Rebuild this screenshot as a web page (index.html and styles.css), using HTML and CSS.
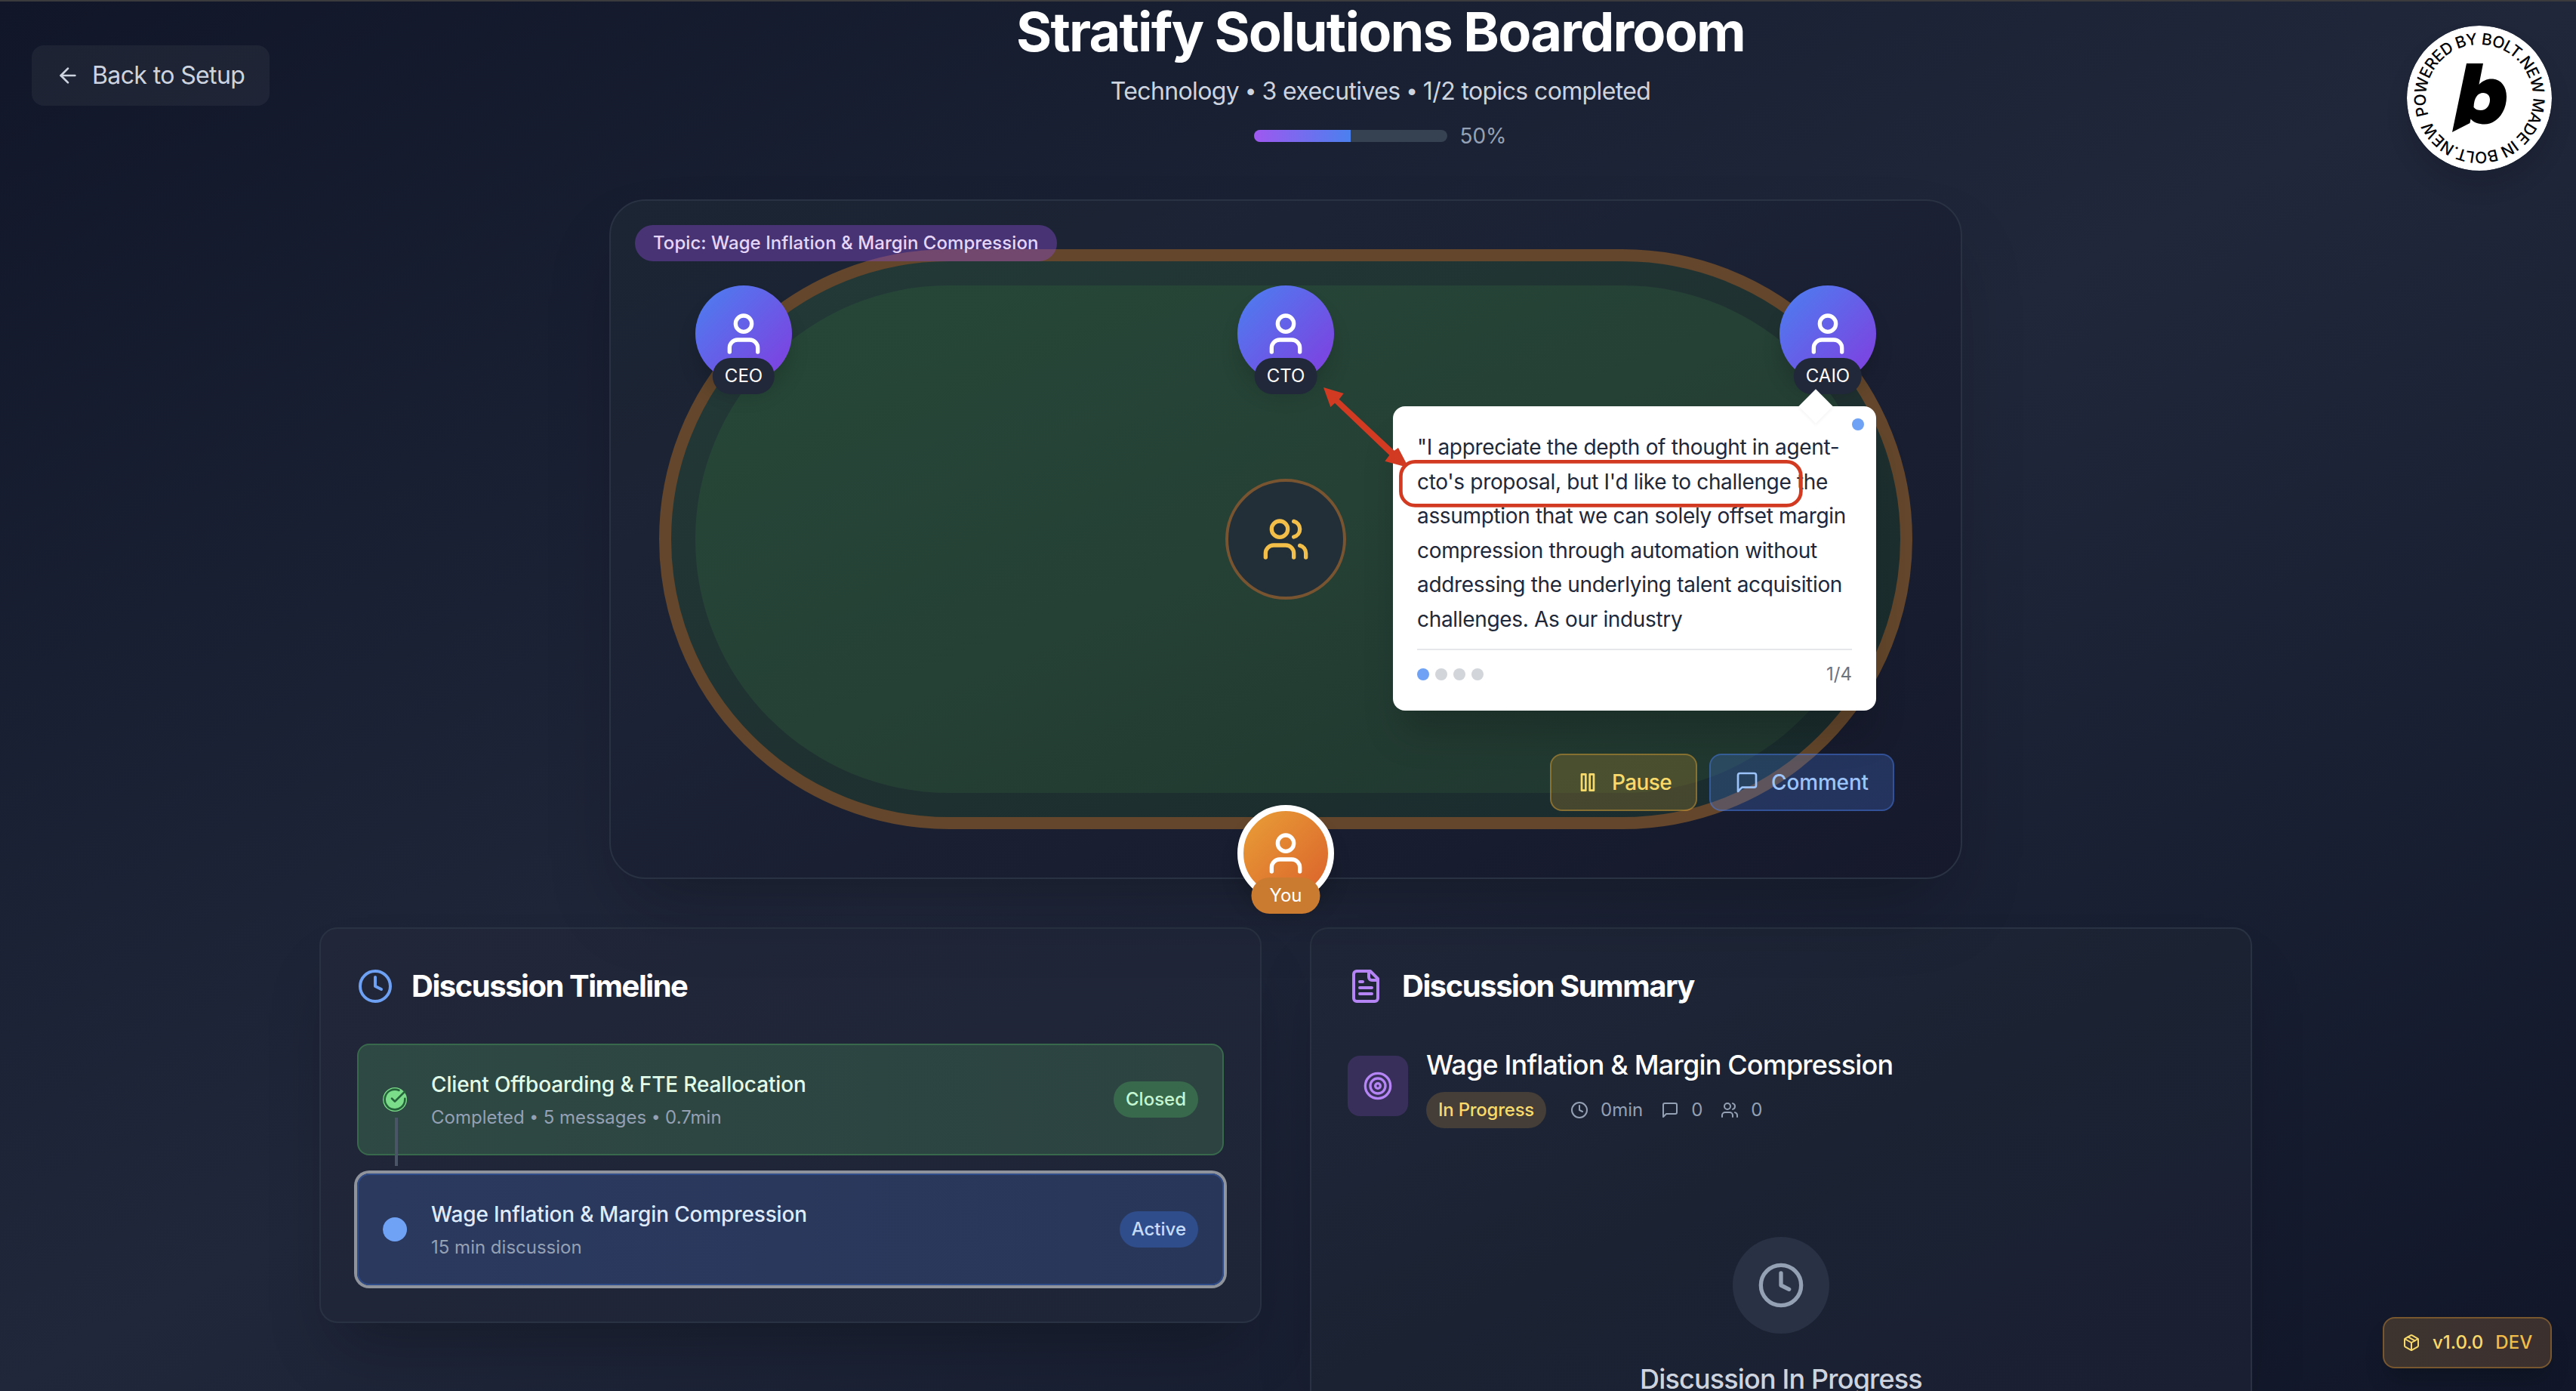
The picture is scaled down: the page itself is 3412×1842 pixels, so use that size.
FILE: index.html
```html
<!DOCTYPE html>
<html lang="en">
<head>
<meta charset="utf-8">
<title>Stratify Solutions Boardroom</title>
<link rel="stylesheet" href="styles.css">
</head>
<body>
<svg class="defs" aria-hidden="true">
  <symbol id="user" viewBox="0 0 24 24"><path d="M19 21v-2a4 4 0 0 0-4-4H9a4 4 0 0 0-4 4v2"/><circle cx="12" cy="7" r="4"/></symbol>
  <symbol id="users" viewBox="0 0 24 24"><path d="M16 21v-2a4 4 0 0 0-4-4H6a4 4 0 0 0-4 4v2"/><circle cx="9" cy="7" r="4"/><path d="M22 21v-2a4 4 0 0 0-3-3.87"/><path d="M16 3.13a4 4 0 0 1 0 7.75"/></symbol>
  <symbol id="clock" viewBox="0 0 24 24"><circle cx="12" cy="12" r="10"/><path d="M12 6v6l4 2"/></symbol>
  <symbol id="message" viewBox="0 0 24 24"><path d="M21 15a2 2 0 0 1-2 2H7l-4 4V5a2 2 0 0 1 2-2h14a2 2 0 0 1 2 2z"/></symbol>
  <symbol id="arrow-left" viewBox="0 0 24 24"><path d="m12 19-7-7 7-7"/><path d="M19 12H5"/></symbol>
  <symbol id="pause" viewBox="0 0 24 24"><rect x="6" y="4" width="4" height="16"/><rect x="14" y="4" width="4" height="16"/></symbol>
  <symbol id="file-text" viewBox="0 0 24 24"><path d="M15 2H6a2 2 0 0 0-2 2v16a2 2 0 0 0 2 2h12a2 2 0 0 0 2-2V7Z"/><path d="M14 2v4a2 2 0 0 0 2 2h4"/><path d="M10 9H8"/><path d="M16 13H8"/><path d="M16 17H8"/></symbol>
  <symbol id="target" viewBox="0 0 24 24"><circle cx="12" cy="12" r="10"/><circle cx="12" cy="12" r="6"/><circle cx="12" cy="12" r="2"/></symbol>
  <symbol id="check-circle" viewBox="0 0 24 24"><path d="M22 11.08V12a10 10 0 1 1-5.93-9.14"/><path d="m9 11 3 3L22 4"/></symbol>
  <symbol id="package" viewBox="0 0 24 24"><path d="m7.5 4.27 9 5.15"/><path d="M21 8a2 2 0 0 0-1-1.73l-7-4a2 2 0 0 0-2 0l-7 4A2 2 0 0 0 3 8v8a2 2 0 0 0 1 1.73l7 4a2 2 0 0 0 2 0l7-4A2 2 0 0 0 21 16Z"/><path d="m3.3 7 8.7 5 8.7-5"/><path d="M12 22V12"/></symbol>
</svg>

<div class="page">
  <header class="header">
    <button class="back"><svg class="icon i32"><use href="#arrow-left"/></svg><span>Back to Setup</span></button>
    <div class="heading">
      <h1>Stratify Solutions Boardroom</h1>
      <p class="subtitle">Technology <span class="sep">•</span> 3 executives <span class="sep">•</span> 1/2 topics completed</p>
      <div class="progress">
        <div class="track"><div class="fill" style="width:50%"></div></div>
        <span>50%</span>
      </div>
    </div>
  </header>

  <section class="boardroom">
    <div class="table">
      <div class="felt"></div>
      <div class="center-seat"><svg class="icon i64"><use href="#users"/></svg></div>
    </div>
    <div class="topic">Topic: Wage Inflation &amp; Margin Compression</div>
    <div class="seats">
      <div class="seat"><svg class="icon i64"><use href="#user"/></svg><span class="role">CEO</span></div>
      <div class="seat"><svg class="icon i64"><use href="#user"/></svg><span class="role">CTO</span></div>
      <div class="seat"><svg class="icon i64"><use href="#user"/></svg><span class="role">CAIO</span>
        <div class="bubble">
          <i class="tail"></i><i class="dot live"></i>
          <p>"I appreciate the depth of thought in agent-<br>cto's proposal, but I'd like to challenge the<br>assumption that we can solely offset margin<br>compression through automation without<br>addressing the underlying talent acquisition<br>challenges. As our industry</p>
          <div class="pager">
            <div class="dots"><i class="dot on"></i><i class="dot"></i><i class="dot"></i><i class="dot"></i></div>
            <span>1/4</span>
          </div>
        </div>
      </div>
    </div>
    <div class="controls">
      <button class="control pause"><svg class="icon i32"><use href="#pause"/></svg>Pause</button>
      <button class="control comment"><svg class="icon i32"><use href="#message"/></svg>Comment</button>
    </div>
    <div class="seat you"><svg class="icon i64"><use href="#user"/></svg><span class="role">You</span></div>
  </section>

  <div class="panels">
    <section class="panel timeline">
      <h2><svg class="icon i48 blue"><use href="#clock"/></svg>Discussion Timeline</h2>
      <div class="items">
        <div class="item closed">
          <span class="status"><svg class="icon i32"><use href="#check-circle"/></svg></span>
          <div class="info"><h3>Client Offboarding &amp; FTE Reallocation</h3><p>Completed <span class="sep">•</span> 5 messages <span class="sep">•</span> 0.7min</p></div>
          <span class="tag">Closed</span>
          <i class="connector"></i>
        </div>
        <div class="item active">
          <span class="status"></span>
          <div class="info"><h3>Wage Inflation &amp; Margin Compression</h3><p>15 min discussion</p></div>
          <span class="tag">Active</span>
        </div>
      </div>
    </section>
    <section class="panel summary">
      <h2><svg class="icon i48 purple"><use href="#file-text"/></svg>Discussion Summary</h2>
      <div class="current">
        <div class="tile"><svg class="icon i40"><use href="#target"/></svg></div>
        <div>
          <h3>Wage Inflation &amp; Margin Compression</h3>
          <div class="meta">
            <span class="tag">In Progress</span>
            <div class="stats">
              <span><svg class="icon i24"><use href="#clock"/></svg>0min</span>
              <span><svg class="icon i24"><use href="#message"/></svg>0</span>
              <span><svg class="icon i24"><use href="#users"/></svg>0</span>
            </div>
          </div>
        </div>
      </div>
      <div class="pending">
        <div class="pending-icon"><svg class="icon i64"><use href="#clock"/></svg></div>
        <h4>Discussion In Progress</h4>
      </div>
    </section>
  </div>
</div>

<svg class="annotation" viewBox="0 0 660 180">
  <path class="arrow" d="M3 5 29.700 13 23.700 20.700 96.700 88.700 102 85 112.500 105 110 109.700 84.300 102.700 90.300 94.700 18 25.700 12.300 31Z"/>
  <rect class="outline" x="105.400" y="103.400" width="530" height="58" rx="19"/>
</svg>

<svg class="bolt" viewBox="0 0 192 192">
  <defs><path id="ring" d="M96 96m-71 0a71 71 0 1 1 142 0a71 71 0 1 1-142 0"/></defs>
  <circle cx="96" cy="96" r="96" fill="#fff"/>
  <text transform="rotate(-18.500 96 96)"><textPath href="#ring" textLength="438" startOffset="0">POWERED BY BOLT.NEW MADE IN BOLT.NEW</textPath></text>
  <path fill-rule="evenodd" d="M79 50H101L95.500 78C100 73 106 70.500 112 70.500C124 70.500 132 80 132 94C132 114 119 130.500 103 130.500C95 130.500 88 128 84.500 123.500L83.500 129L60 141ZM101 89C94 89 89 95 88.500 108C91 111 94 112 98 112C105 112 110 106 110 98C110 92.500 106.500 89 101 89Z"/>
</svg>

<div class="version"><svg class="icon i24"><use href="#package"/></svg><span>v1.0.0</span><b>DEV</b></div>
</body>
</html>
```
FILE: styles.css
```css
* { box-sizing: border-box; margin: 0; }
html, body { height: 1842px; overflow: hidden; }
body {
  position: relative;
  font-family: Inter, "Liberation Sans", sans-serif;
  font-size: 32px;
  line-height: 48px;
  color: #fff;
  background: linear-gradient(to bottom right, #111729, #20273a 50%, #111729);
}
button { font: inherit; color: inherit; border: 0; }
h1, h2, h3, h4 { font-weight: 600; }
.page { height: 1842px; overflow: hidden; border-top: 2px solid #3b3a3c; }
.defs { position: absolute; width: 0; height: 0; }
.sep { padding: 0 1.5px; font-family: "Liberation Sans", sans-serif; }
.icon { flex: none; fill: none; stroke: currentColor; stroke-width: 2; stroke-linecap: round; stroke-linejoin: round; }
.i24 { width: 24px; height: 24px; }
.i32 { width: 32px; height: 32px; }
.i40 { width: 40px; height: 40px; }
.i48 { width: 48px; height: 48px; }
.i64 { width: 64px; height: 64px; }
.blue { color: #6ea1f4; }
.purple { color: #b685f5; }

.header { display: grid; grid-template-columns: 315px 1fr; align-items: start; height: 262px; padding: 0 112px 0 42px; }
.back { display: flex; align-items: center; gap: 16px; height: 80px; margin-top: 58px; padding: 16px 32px; border-radius: 16px; background: rgba(255,255,255,.05); color: #cdd4df; letter-spacing: -.62px; white-space: nowrap; }
.heading { display: flex; flex-direction: column; align-items: center; }
h1 { font-size: 72px; font-weight: 700; line-height: 80px; letter-spacing: -1.8px; }
.subtitle { margin-top: 15px; color: #cdd4df; letter-spacing: -.62px; }
.progress { display: flex; align-items: center; gap: 16px; margin-top: 15px; font-size: 28px; line-height: 40px; color: #95a1b5; }
.track { width: 256px; height: 16px; border-radius: 8px; background: #364152; overflow: hidden; }
.fill { height: 100%; background: linear-gradient(to right, #9f58f0, #4b80ef); }

.boardroom { position: relative; width: 1792px; height: 900px; margin-left: 807px; padding: 64px; border: 2px solid #293242; border-radius: 48px; background: linear-gradient(to bottom right, #1b2533, #1c2235 40%, #15192b); box-shadow: 0 50px 100px -24px rgba(0,0,0,.25); }
.table { position: relative; height: 768px; padding: 32px; border: 16px solid #63462b; border-radius: 384px; background: linear-gradient(to bottom right, #233a38, #1e302f 60%, #192b2d); }
.felt { height: 100%; border-radius: 336px; background: linear-gradient(to bottom right, #264838, #254035 50%, #1f362e); }
.center-seat { position: absolute; left: 50%; top: 50%; width: 160px; height: 160px; margin: -80px 0 0 -80px; display: flex; align-items: center; justify-content: center; border: 4px solid #785431; border-radius: 50%; background: #222f38; color: #f4bf49; }
.topic { position: absolute; left: 32px; top: 32px; height: 48px; padding: 8px 24px; border-radius: 24px; font-size: 24px; font-weight: 500; line-height: 32px; letter-spacing: .06px; background: rgba(139,74,215,.4); color: #e6d6fc; white-space: nowrap; }
.seats { position: absolute; left: 112px; right: 112px; top: 112px; display: flex; justify-content: space-between; }
.seat { position: relative; width: 128px; height: 128px; display: flex; align-items: center; justify-content: center; border-radius: 50%; background: linear-gradient(135deg, #4a80f0, #833bdf); box-shadow: 0 20px 30px -6px rgba(0,0,0,.2); }
.role { position: absolute; top: 96px; left: 50%; transform: translateX(-50%); padding: 8px 16px; border-radius: 24px; background: #20283a; font-size: 24px; line-height: 32px; }
.you { position: absolute; left: 830px; top: 800px; border: 8px solid #fff; background: linear-gradient(135deg, #e9a338, #da5d2a); background-origin: border-box; }
.you .role { top: 88px; padding: 8px 24px; background: #cb7b2f; }
.bubble { position: absolute; z-index: 2; right: 0; top: 160px; width: 640px; padding: 32px; border-radius: 16px; background: #fff; color: #20283a; font-size: 28px; line-height: 45.5px; box-shadow: 0 40px 50px -10px rgba(0,0,0,.18); }
.bubble p { white-space: nowrap; letter-spacing: -.33px; }
.tail { position: absolute; top: -16px; right: 64px; width: 32px; height: 32px; background: #fff; transform: rotate(45deg); box-shadow: 2px 2px 4px rgba(0,0,0,.04); }
.dot { width: 16px; height: 16px; border-radius: 50%; background: #d2d5da; }
.live { position: absolute; top: 16px; right: 16px; }
.live, .on { background: #6fa2f4; }
.pager { display: flex; align-items: center; justify-content: space-between; margin-top: 16px; padding-top: 16px; border-top: 2px solid #e5e7eb; color: #6b7280; font-size: 24px; line-height: 32px; }
.dots { display: flex; gap: 8px; }
.controls { position: absolute; right: 88px; bottom: 88px; display: flex; gap: 16px; }
.control { display: flex; align-items: center; gap: 16px; height: 76px; padding: 0 32px; border-radius: 16px; font-size: 28px; font-weight: 500; line-height: 40px; }
.pause { border: 2px solid rgba(225,165,55,.42); background: rgba(225,165,50,.22); color: #f7da6b; letter-spacing: -.6px; }
.comment { border: 2px solid rgba(75,128,239,.4); background: rgba(75,128,239,.25); color: #9cc3fa; letter-spacing: -.15px; }

.panels { display: grid; grid-template-columns: 1248px 1248px; gap: 64px; align-items: start; margin: 64px 0 0 423px; }
.panel { padding: 48px; border: 2px solid #293242; border-radius: 24px; background: linear-gradient(to bottom right, #212739, #1e2537); box-shadow: 0 50px 80px -24px rgba(0,0,0,.25); }
.summary { height: 614px; padding-bottom: 0; border-bottom: 0; border-bottom-left-radius: 0; border-bottom-right-radius: 0; background: linear-gradient(to bottom right, #1f2638, #1b2333 50%, #1a1f31); }
h2 { display: flex; align-items: center; gap: 24px; font-size: 40px; font-weight: 650; line-height: 56px; letter-spacing: -1.47px; }
.items { display: flex; flex-direction: column; gap: 24px; margin-top: 48px; }
.item { position: relative; display: flex; align-items: center; gap: 32px; height: 148px; padding: 32px; border-radius: 16px; }
.closed { border: 2px solid #39694c; background: linear-gradient(to right, #2e4843, #2c4341); color: #e1fbe9; }
.active { border: 2px solid #304d8b; background: linear-gradient(to right, #2b395f, #283759); color: #deeafd; box-shadow: 0 0 0 4px #8f939c; }
.status { width: 32px; height: 32px; border-radius: 50%; background: #7bdc89; color: #25633b; display: flex; }
.active .status { background: #6fa2f4; }
.info { flex: 1; }
.item h3 { font-size: 28px; font-weight: 500; line-height: 40px; letter-spacing: -.15px; }
.item p { margin-top: 8px; font-size: 24px; line-height: 32px; color: #94a0b4; }
.tag { padding: 8px 16px; border-radius: 24px; font-size: 24px; font-weight: 500; line-height: 32px; white-space: nowrap; }
.closed .tag { background: #39694c; color: #c4f6d2; }
.active .tag { background: #304d8b; color: #c5dcfc; }
.connector { position: absolute; left: 48px; top: 96px; width: 4px; height: 64px; background: #4a5567; }
.current { display: flex; align-items: center; gap: 24px; margin-top: 48px; }
.tile { width: 80px; height: 80px; display: flex; align-items: center; justify-content: center; border-radius: 16px; background: #382f5a; color: #b685f5; }
.current h3 { font-size: 36px; font-weight: 500; line-height: 56px; letter-spacing: -.82px; }
.meta { display: flex; align-items: center; gap: 32px; margin-top: 8px; }
.meta .tag { background: #453d38; color: #f7da6b; letter-spacing: -.25px; }
.stats { display: flex; gap: 24px; font-size: 24px; line-height: 32px; color: #94a0b4; }
.stats span { display: flex; align-items: center; gap: 16px; }
.pending { display: flex; flex-direction: column; align-items: center; margin-top: 144px; color: #94a0b4; }
.pending-icon { width: 128px; height: 128px; display: flex; align-items: center; justify-content: center; border-radius: 50%; background: #293144; }
.pending h4 { margin-top: 32px; font-size: 36px; font-weight: 500; line-height: 56px; letter-spacing: -.84px; color: #cdd4df; }

.annotation { position: absolute; z-index: 5; left: 1750px; top: 508px; width: 660px; height: 180px; }
.outline { fill: none; stroke: #d23b22; stroke-width: 4.7; }
.arrow { fill: #d23b22; }
.bolt { position: absolute; left: 3188px; top: 34px; width: 192px; height: 192px; border-radius: 50%; box-shadow: 0 20px 30px rgba(0,0,0,.12); }
.bolt text { font-size: 21px; font-weight: 500; }
.version { position: absolute; left: 3156px; top: 1744px; width: 224px; height: 68px; display: flex; align-items: center; gap: 16px; padding: 0 24px; border: 2px solid #78572f; border-radius: 16px; background: linear-gradient(to right, #3d342f, #3c302f); color: #f7da6b; font-size: 24px; font-weight: 500; line-height: 32px; box-shadow: 0 20px 30px -6px rgba(0,0,0,.2); }
.version b { font-weight: 500; color: #f1bd48; }
```
